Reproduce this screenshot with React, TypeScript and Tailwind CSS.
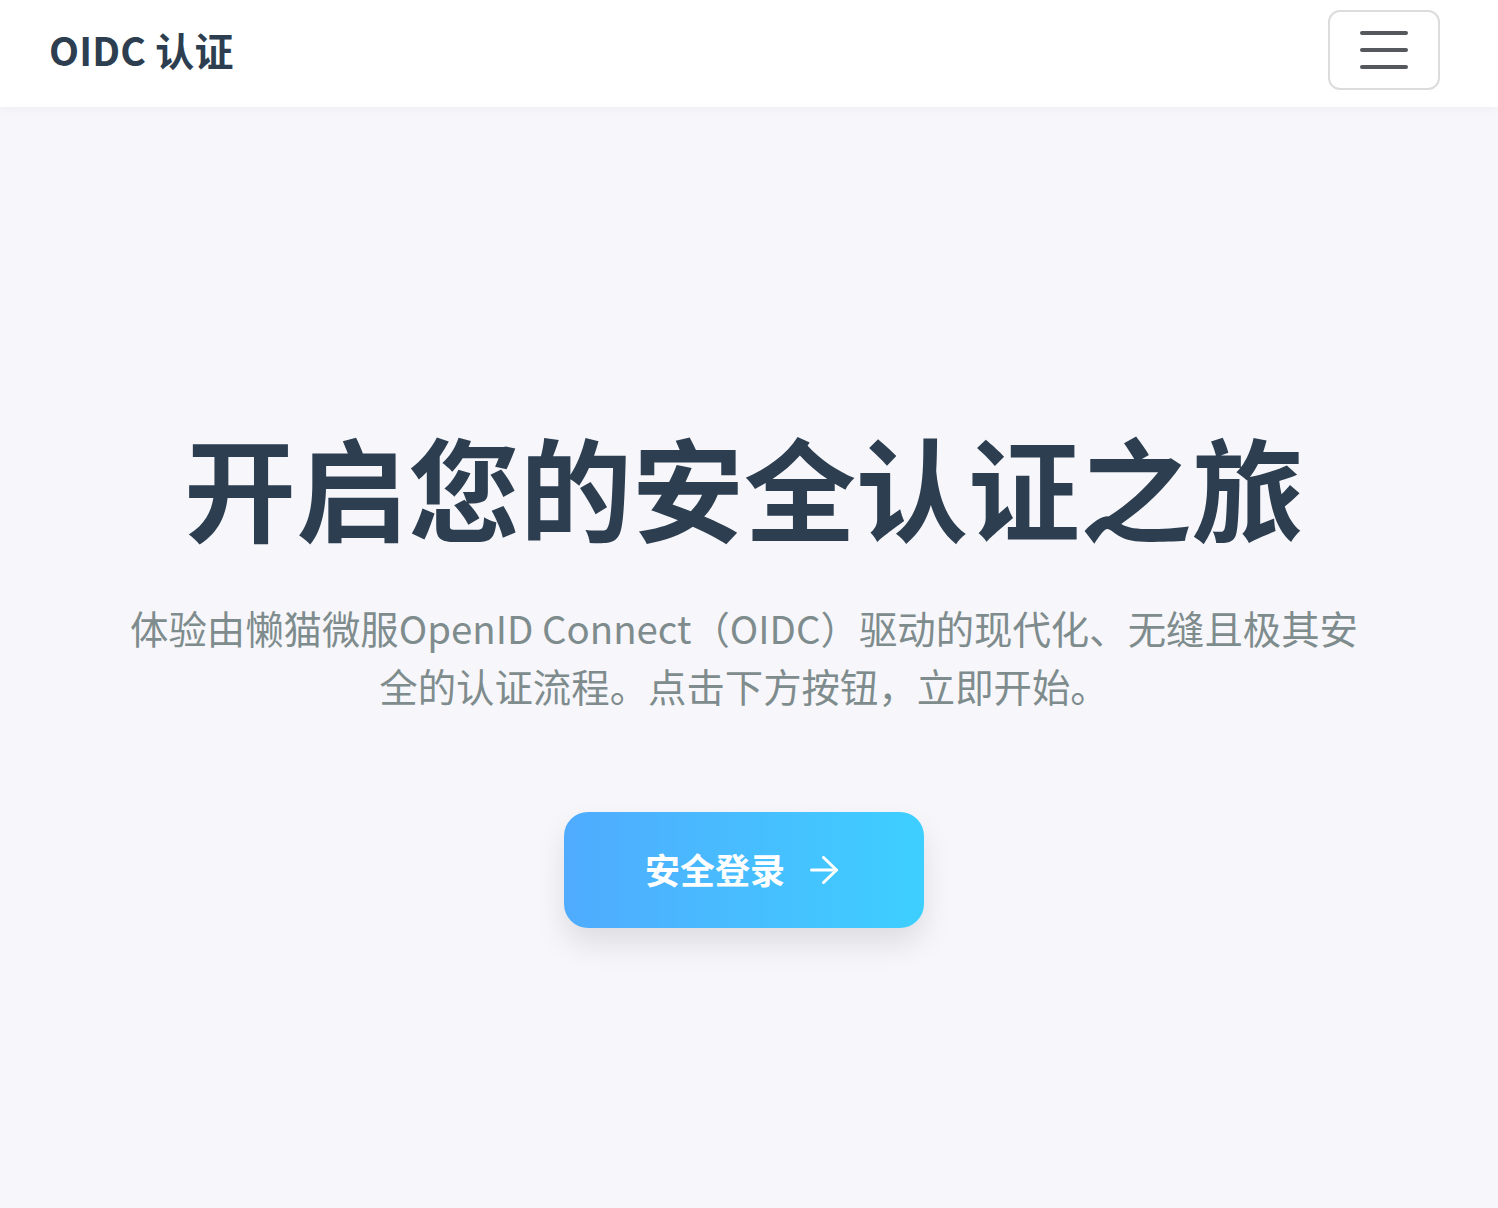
import React from "react";

export default function App() {
  const font = { fontFamily: '"Noto Sans CJK SC", "Noto Sans", sans-serif' };
  return (
    <div className="min-h-[1208px] w-full bg-[#f7f7fb] flex flex-col" style={font}>
      <header className="h-[107px] bg-white flex items-center justify-between pl-[49px] pr-[58px] pb-[8px] shadow-[0_2px_10px_rgba(0,0,0,0.04)] relative z-10">
        <div className="text-[39px] font-semibold text-[#2c3e50] tracking-[0.2px]">OIDC 认证</div>
        <button className="w-[112px] h-[80px] border-2 border-[#dcdcdc] rounded-[12px] flex flex-col items-center justify-center gap-[13px] bg-white">
          <span className="block w-[48px] h-[4px] rounded-full bg-[#55585c]" />
          <span className="block w-[48px] h-[4px] rounded-full bg-[#55585c]" />
          <span className="block w-[48px] h-[4px] rounded-full bg-[#55585c]" />
        </button>
      </header>
      <main className="flex-1 flex flex-col items-center pt-[311px] pr-[10px]">
        <h1 className="text-[112px] leading-[1.2] font-bold text-[#2c3e50] whitespace-nowrap">开启您的安全认证之旅</h1>
        <p className="mt-[47px] max-w-[1240px] text-center text-[38.4px] leading-[1.5] text-[#7f8c8d]">
          体验由懒猫微服OpenID Connect（OIDC）驱动的现代化、无缝且极其安全的认证流程。点击下方按钮，立即开始。
        </p>
        <button className="mt-[97px] w-[360px] h-[116px] rounded-[24px] bg-gradient-to-r from-[#4fabfe] to-[#3dcfff] shadow-[0_16px_30px_rgba(0,0,0,0.10)] flex items-center justify-center gap-[25px] pr-[5px] text-white">
          <span className="text-[35px] font-bold">安全登录</span>
          <svg width="28" height="28" viewBox="0 0 28 28" fill="none" stroke="white" strokeWidth="3" strokeLinecap="round" strokeLinejoin="round">
            <path d="M1.5 14H26.5" />
            <path d="M13.5 1.5L26.5 14L13.5 26.5" />
          </svg>
        </button>
      </main>
    </div>
  );
}
